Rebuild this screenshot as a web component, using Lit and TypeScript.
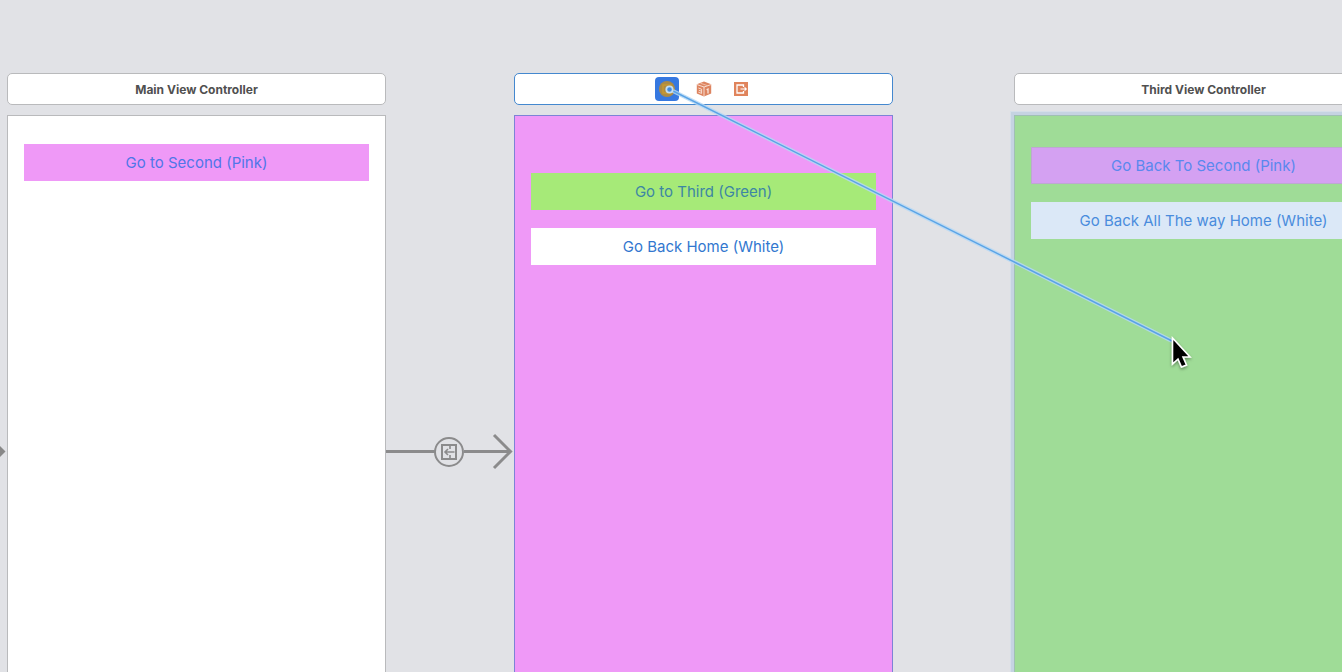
import { LitElement, html, css, svg, nothing } from "lit";
import { customElement, property } from "lit/decorators.js";
import { classMap } from "lit/directives/class-map.js";

interface SceneAction {
  label: string;
  tone: string;
}

const controllerIcon = svg`
  <circle cx="12" cy="12" r="8" fill="#ab8a46"></circle>
  <rect x="8" y="8" width="8" height="8" fill="none" stroke="#c99a2e" stroke-width="1.4"></rect>`;

const responderIcon = svg`
  <path d="M12 4.6 L19.2 7.2 V16.4 L12 19.4 L4.8 16.4 V7.2 Z" fill="#dd8460"></path>
  <path d="M5 7.6 L12 10 L19 7.6 M12 10 V19.2" fill="none" stroke="#fbe6dc" stroke-width="0.9"></path>
  <path d="M8.4 6.2 L15.6 8.7" fill="none" stroke="#f3c9b5" stroke-width="0.8"></path>
  <path d="M6.4 11 L9.6 12.2 V16.4 L6.4 15.2 M6.8 13.3 L9.4 14.2" fill="none" stroke="#fbe6dc" stroke-width="0.9"></path>
  <path d="M14.6 12.8 L16 12 V16.6" fill="none" stroke="#fbe6dc" stroke-width="1.3"></path>`;

const exitIcon = svg`
  <rect x="5" y="5" width="14" height="14" fill="#e0845c"></rect>
  <path d="M14.5 10 V8 H8 V16 H14.5 V14" fill="none" stroke="#fff" stroke-width="1.3"></path>
  <path d="M11.5 12 H17.3 M15.6 10.3 L17.3 12 L15.6 13.7" fill="none" stroke="#fff" stroke-width="1.1"></path>`;

@customElement("story-scene")
export class StoryScene extends LitElement {
  @property() name = "";
  @property() tone = "white";
  @property({ attribute: false }) actions: SceneAction[] = [];

  static styles = css`
    :host {
      display: flex;
      flex-direction: column;
      flex: none;
      width: 379px;
      gap: 10px;
      box-sizing: border-box;
    }
    .bar {
      display: flex;
      align-items: center;
      justify-content: center;
      box-sizing: border-box;
      height: 32px;
      border: 1px solid #b9babc;
      border-radius: 5px;
      background: #fff;
    }
    .bar.selected {
      gap: 13px;
      border-color: #4488cf;
    }
    .title {
      margin: 0;
      padding-top: 2px;
      font-size: 12px;
      line-height: 16px;
      font-weight: 700;
      color: #505050;
    }
    .dock {
      width: 24px;
      height: 24px;
      padding: 0;
      border: 0;
      border-radius: 4px;
      background: none;
    }
    .dock.active {
      background: #3678e0;
    }
    .dock svg {
      display: block;
    }
    .device {
      display: flex;
      flex-direction: column;
      gap: 18px;
      box-sizing: border-box;
      height: 673px;
      padding: 28px 16px;
      border: 1px solid #b9babc;
      background: #fff;
    }
    .device.pink {
      padding-top: 57px;
      border-color: #7d83d6;
      background: #ef99f7;
    }
    .device.green {
      padding-top: 31px;
      border-color: #9fbfb4;
      background: #9fdc97;
      box-shadow: 0 0 0 3px #c5d3e2, 0 0 0 4px #d5dfe9;
    }
    .action {
      height: 37px;
      padding: 0;
      border: 0;
      font: inherit;
      font-size: 15px;
      line-height: 20px;
      color: #3277cf;
    }
    .action.pink {
      background: #ef99f7;
      color: #4f76e8;
    }
    .action.lime {
      background: #a6ea78;
      color: #3d86a4;
    }
    .action.white {
      background: #fff;
    }
    .action.lilac {
      border: 1px solid #bea7d2;
      background: #d4a1f2;
      color: #5a88ee;
    }
    .action.ice {
      background: #dbe8f7;
      color: #4a8cdd;
    }
  `;

  private dockButton(label: string, icon: unknown, active = false) {
    return html`<button class=${classMap({ dock: true, active })} type="button" aria-label=${label}>
      <svg width="24" height="24" viewBox="0 0 24 24" aria-hidden="true">${icon}</svg>
    </button>`;
  }

  render() {
    const selected = this.name === "";
    return html`
      <header class=${classMap({ bar: true, selected })}>
        ${selected
          ? html`${this.dockButton("View Controller", controllerIcon, true)}
            ${this.dockButton("First Responder", responderIcon)}
            ${this.dockButton("Exit", exitIcon)}`
          : html`<h2 class="title">${this.name}</h2>`}
      </header>
      <section class="device ${this.tone}">
        ${this.actions.length
          ? this.actions.map((a) => html`<button class="action ${a.tone}" type="button">${a.label}</button>`)
          : nothing}
      </section>
    `;
  }
}

@customElement("app-root")
export class AppRoot extends LitElement {
  static styles = css`
    :host {
      display: block;
      font-family: Inter, "Liberation Sans", sans-serif;
    }
    .canvas {
      position: relative;
      display: flex;
      align-items: flex-start;
      box-sizing: border-box;
      height: 100vh;
      padding-top: 73px;
      overflow: hidden;
      background: #e1e2e6;
    }
    .link {
      display: flex;
      flex: none;
      align-items: center;
      width: 128px;
      height: 673px;
      padding-top: 42px;
    }
    .link.entry {
      width: 7px;
    }
    .last {
      margin-left: 121px;
    }
    .drag {
      position: absolute;
      top: 0;
      left: 0;
      width: 100%;
      height: 100%;
      pointer-events: none;
    }
  `;

  render() {
    return html`
      <main class="canvas">
        <div class="link entry">
          <svg width="7" height="15" viewBox="0 0 7 15" aria-hidden="true">
            <path d="M0 2 L5.5 7.5 L0 13 Z" fill="#888"></path>
          </svg>
        </div>
        <story-scene
          name="Main View Controller"
          .actions=${[{ label: "Go to Second (Pink)", tone: "pink" }]}
        ></story-scene>
        <div class="link">
          <svg width="128" height="41" viewBox="0 0 128 41" fill="none" stroke="#8b8b8c" aria-hidden="true">
            <path d="M0 20.5 H49 M78 20.5 H124" stroke-width="3"></path>
            <path d="M108 4 L124.5 20.5 L108 37" stroke-width="3"></path>
            <circle cx="63" cy="21" r="14" stroke-width="2"></circle>
            <path d="M56 14 H70 V28 H56 Z" stroke-width="2"></path>
            <path d="M64 14 V18 M64 24 V28 M59 21 H68.5 M62 18 L59 21 L62 24" stroke-width="1.6"></path>
          </svg>
        </div>
        <story-scene
          tone="pink"
          .actions=${[
            { label: "Go to Third (Green)", tone: "lime" },
            { label: "Go Back Home (White)", tone: "white" },
          ]}
        ></story-scene>
        <story-scene
          class="last"
          name="Third View Controller"
          tone="green"
          .actions=${[
            { label: "Go Back To Second (Pink)", tone: "lilac" },
            { label: "Go Back All The way Home (White)", tone: "ice" },
          ]}
        ></story-scene>
        <svg class="drag" aria-hidden="true">
          <defs>
            <filter id="shade" x="-50%" y="-50%" width="200%" height="200%">
              <feDropShadow dx="0" dy="1.5" stdDeviation="1.5" flood-color="#000" flood-opacity="0.4"></feDropShadow>
            </filter>
          </defs>
          <path d="M673 91 L1172 341" stroke="#b5d8f4" stroke-width="4" stroke-opacity="0.85"></path>
          <path d="M673 91 L1172 341" stroke="#5aa3e6" stroke-width="1.4"></path>
          <circle cx="669.5" cy="89.5" r="3.2" fill="#3f8ae0" stroke="#c3def3" stroke-width="1.8"></circle>
          <path
            d="M1172.5 338 V364 L1178 359 L1181.5 367 L1186.5 365 L1183 357 H1190 Z"
            fill="#000"
            stroke="#fff"
            stroke-width="1.6"
            stroke-linejoin="miter"
            filter="url(#shade)"
          ></path>
        </svg>
      </main>
    `;
  }
}
